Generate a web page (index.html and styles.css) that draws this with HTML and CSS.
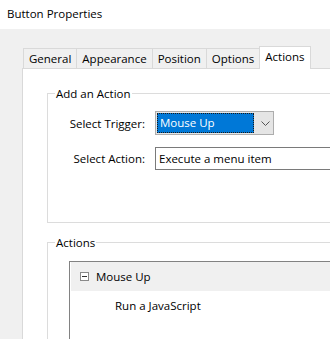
FILE: index.html
```html
<!DOCTYPE html>
<html lang="en">
<head>
    <meta charset="UTF-8">
    <title>Button Properties</title>
    <link rel="stylesheet" href="styles.css">
</head>
<body>
    <div class="titlebar">Button Properties</div>
    <div class="dialog">
        <!-- Tabs -->
        <div class="tabs">
            <div class="tab">General</div>
            <div class="tab">Appearance</div>
            <div class="tab">Position</div>
            <div class="tab">Options</div>
            <div class="tab active">Actions</div>
        </div>
        <div class="panel">
            <fieldset class="group add-group">
                <legend>Add an Action</legend>
                <div class="row">
                    <span class="label">Select Trigger:</span>
                    <div class="combo">
                        <span class="combo-value">Mouse Up</span>
                        <svg class="chevron" width="9" height="5" viewBox="0 0 9 5"><path d="M0.5 0.5 L4.5 4.5 L8.5 0.5" fill="none" stroke="#555" stroke-width="1"/></svg>
                    </div>
                </div>
                <div class="row">
                    <span class="label">Select Action:</span>
                    <div class="field">Execute a menu item</div>
                </div>
            </fieldset>
            <fieldset class="group actions-group">
                <legend>Actions</legend>
                <div class="tree">
                    <div class="tree-row parent">
                        <svg class="toggle" width="9" height="9" viewBox="0 0 9 9"><rect x="0.5" y="0.5" width="8" height="8" fill="#fff" stroke="#8a8a8a"/><path d="M2 4.5 H7" stroke="#333"/></svg>
                        <span>Mouse Up</span>
                    </div>
                    <div class="tree-row child">Run a JavaScript</div>
                </div>
            </fieldset>
        </div>
    </div>
</body>
</html>
```

FILE: styles.css
```css
html, body {
    margin: 0;
    padding: 0;
}

body {
    font-family: 'Open Sans', 'Noto Sans', sans-serif;
    font-size: 11.5px;
    color: #000;
    background-color: #f0f0f0;
    width: 330px;
    height: 339px;
    overflow: hidden;
}

.titlebar {
    background-color: #fff;
    height: 29px;
    box-sizing: border-box;
    padding: 6px 0 0 7px;
    font-size: 11.5px;
}

.dialog {
    padding: 16px 0 0 22px;
}

.tabs {
    display: flex;
    align-items: flex-end;
    padding-left: 1px;
    height: 23px;
}

.tab {
    height: 20px;
    box-sizing: border-box;
    padding: 0 5px;
    border: 1px solid #d9d9d9;
    border-bottom: none;
    border-right: none;
    background-color: #f0f0f0;
    line-height: 19px;
}

.tab.active {
    height: 23px;
    background-color: #fff;
    border-right: 1px solid #d9d9d9;
    margin-bottom: -1px;
    position: relative;
    line-height: 19px;
}

.panel {
    background-color: #fff;
    border-left: 1px solid #d9d9d9;
    border-top: 1px solid #d9d9d9;
    width: 400px;
    height: 300px;
    box-sizing: border-box;
    padding: 17px 0 0 24px;
}

.group {
    margin: 0;
    border: 1px solid #dcdcdc;
    border-right: none;
    padding: 0;
    width: 380px;
    box-sizing: border-box;
}

.group legend {
    padding: 0 1px;
    margin-left: 7px;
}

.add-group {
    height: 137px;
    padding-top: 10px;
}

.row {
    display: flex;
    align-items: center;
    margin-bottom: 12px;
}

.label {
    width: 97px;
    text-align: right;
    margin-right: 10px;
}

.combo {
    width: 119px;
    height: 24px;
    box-sizing: border-box;
    border: 1px solid #adadad;
    background-color: #e5e5e5;
    display: flex;
    align-items: center;
    padding: 1px;
}

.combo-value {
    background-color: #0078d7;
    color: #fff;
    height: 20px;
    width: 97px;
    line-height: 19px;
    padding-left: 3px;
    box-sizing: border-box;
    outline: 1px dotted #1a1a1a;
    outline-offset: -1px;
}

.chevron {
    margin-left: 7px;
}

.field {
    width: 200px;
    height: 23px;
    box-sizing: border-box;
    border: 1px solid #7a7a7a;
    border-right: none;
    line-height: 21px;
    padding-left: 3px;
}

.actions-group {
    margin-top: 12px;
    height: 120px;
}

.tree {
    margin: 11px 0 0 21px;
    border: 1px solid #828282;
    border-right: none;
    height: 100px;
    padding: 0 0 0 1px;
}

.tree-row {
    height: 28px;
    display: flex;
    align-items: center;
}

.parent {
    height: 29px;
    background-color: #f0f0f0;
    padding-left: 9px;
}

.toggle {
    margin-right: 7px;
}

.child {
    padding-left: 44px;
}
```
